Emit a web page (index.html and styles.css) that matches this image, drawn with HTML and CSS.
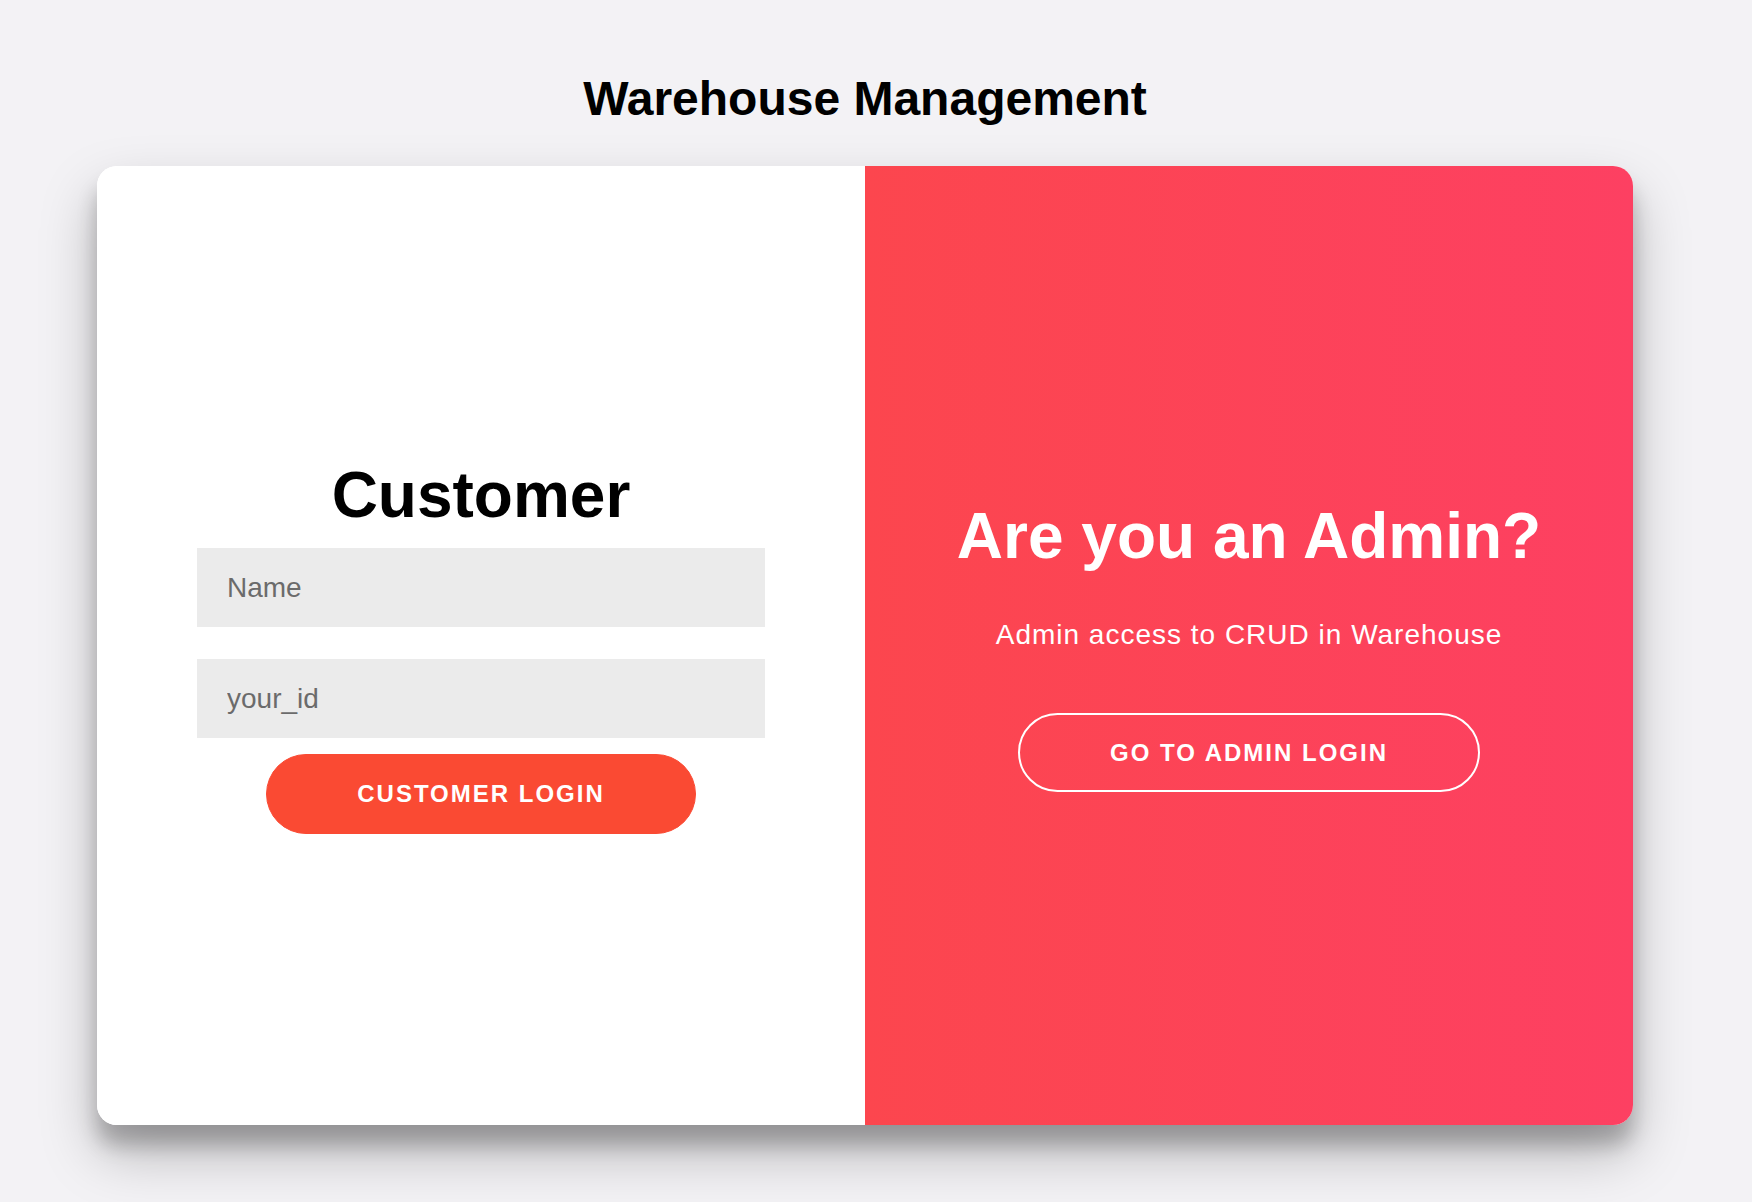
FILE: index.html
```html
<!DOCTYPE html>
<html lang="en">
<head>
<meta charset="utf-8">
<title>Warehouse Management</title>
<link rel="stylesheet" href="styles.css">
</head>
<body>
  <h1 class="page-title">Warehouse Management</h1>
  <div class="card">
    <div class="form-panel">
      <form class="login-form" onsubmit="return false">
        <h1 class="form-title">Customer</h1>
        <input class="field" type="text" placeholder="Name">
        <input class="field" type="text" placeholder="your_id">
        <button class="btn btn-solid" type="submit">Customer Login</button>
      </form>
    </div>
    <div class="overlay-panel">
      <h1 class="overlay-title">Are you an Admin?</h1>
      <p class="overlay-text">Admin access to CRUD in Warehouse</p>
      <button class="btn btn-ghost" type="button">Go to Admin Login</button>
    </div>
  </div>
</body>
</html>
```

FILE: styles.css
```css
* {
  box-sizing: border-box;
}

html, body {
  margin: 0;
  height: 100%;
}

body {
  background: #f3f2f5;
  font-family: "Liberation Sans", Arial, Helvetica, sans-serif;
  display: flex;
  flex-direction: column;
  align-items: center;
  padding: 71px 22px 0 0;
}

.page-title {
  margin: 0 0 40px;
  font-size: 48px;
  font-weight: bold;
  color: #000;
}

.card {
  width: 1536px;
  height: 959px;
  flex: none;
  display: flex;
  background: #fff;
  border-radius: 20px;
  overflow: hidden;
  box-shadow: 0 28px 56px rgba(0, 0, 0, 0.25), 0 20px 20px rgba(0, 0, 0, 0.22);
}

.form-panel {
  width: 50%;
  height: 100%;
  background: #fff;
}

.login-form {
  height: 100%;
  display: flex;
  flex-direction: column;
  align-items: center;
  justify-content: center;
  padding: 0 100px;
  text-align: center;
}

.form-title {
  margin: 0;
  font-size: 64px;
  font-weight: bold;
  color: #000;
}

.field {
  width: 100%;
  margin: 16px 0;
  padding: 24px 30px;
  border: none;
  background: #ebebeb;
  font-family: "Liberation Sans", Arial, sans-serif;
  font-size: 28px;
  line-height: 31px;
  color: #333;
  outline: none;
}

.field::placeholder {
  color: #6b6b6b;
}

.btn {
  border-radius: 40px;
  padding: 24px 90px;
  font-family: "Liberation Sans", Arial, sans-serif;
  font-size: 24px;
  line-height: 30px;
  font-weight: bold;
  letter-spacing: 2px;
  text-transform: uppercase;
  color: #fff;
  cursor: pointer;
}

.btn-solid {
  border: 1px solid #fa4a33;
  background: #fa4a33;
}

.btn-ghost {
  border: 2px solid #fff;
  background: transparent;
  line-height: 27px;
}

.overlay-panel {
  width: 50%;
  height: 100%;
  display: flex;
  flex-direction: column;
  align-items: center;
  justify-content: center;
  text-align: center;
  color: #fff;
  background: linear-gradient(to right, #fc464e, #fd4062);
  padding: 0 80px;
}

.overlay-title {
  margin: 0;
  font-size: 64px;
  font-weight: bold;
}

.overlay-text {
  margin: 42px 0 58px;
  font-size: 28px;
  font-weight: normal;
  line-height: 40px;
  letter-spacing: 1px;
}
```
